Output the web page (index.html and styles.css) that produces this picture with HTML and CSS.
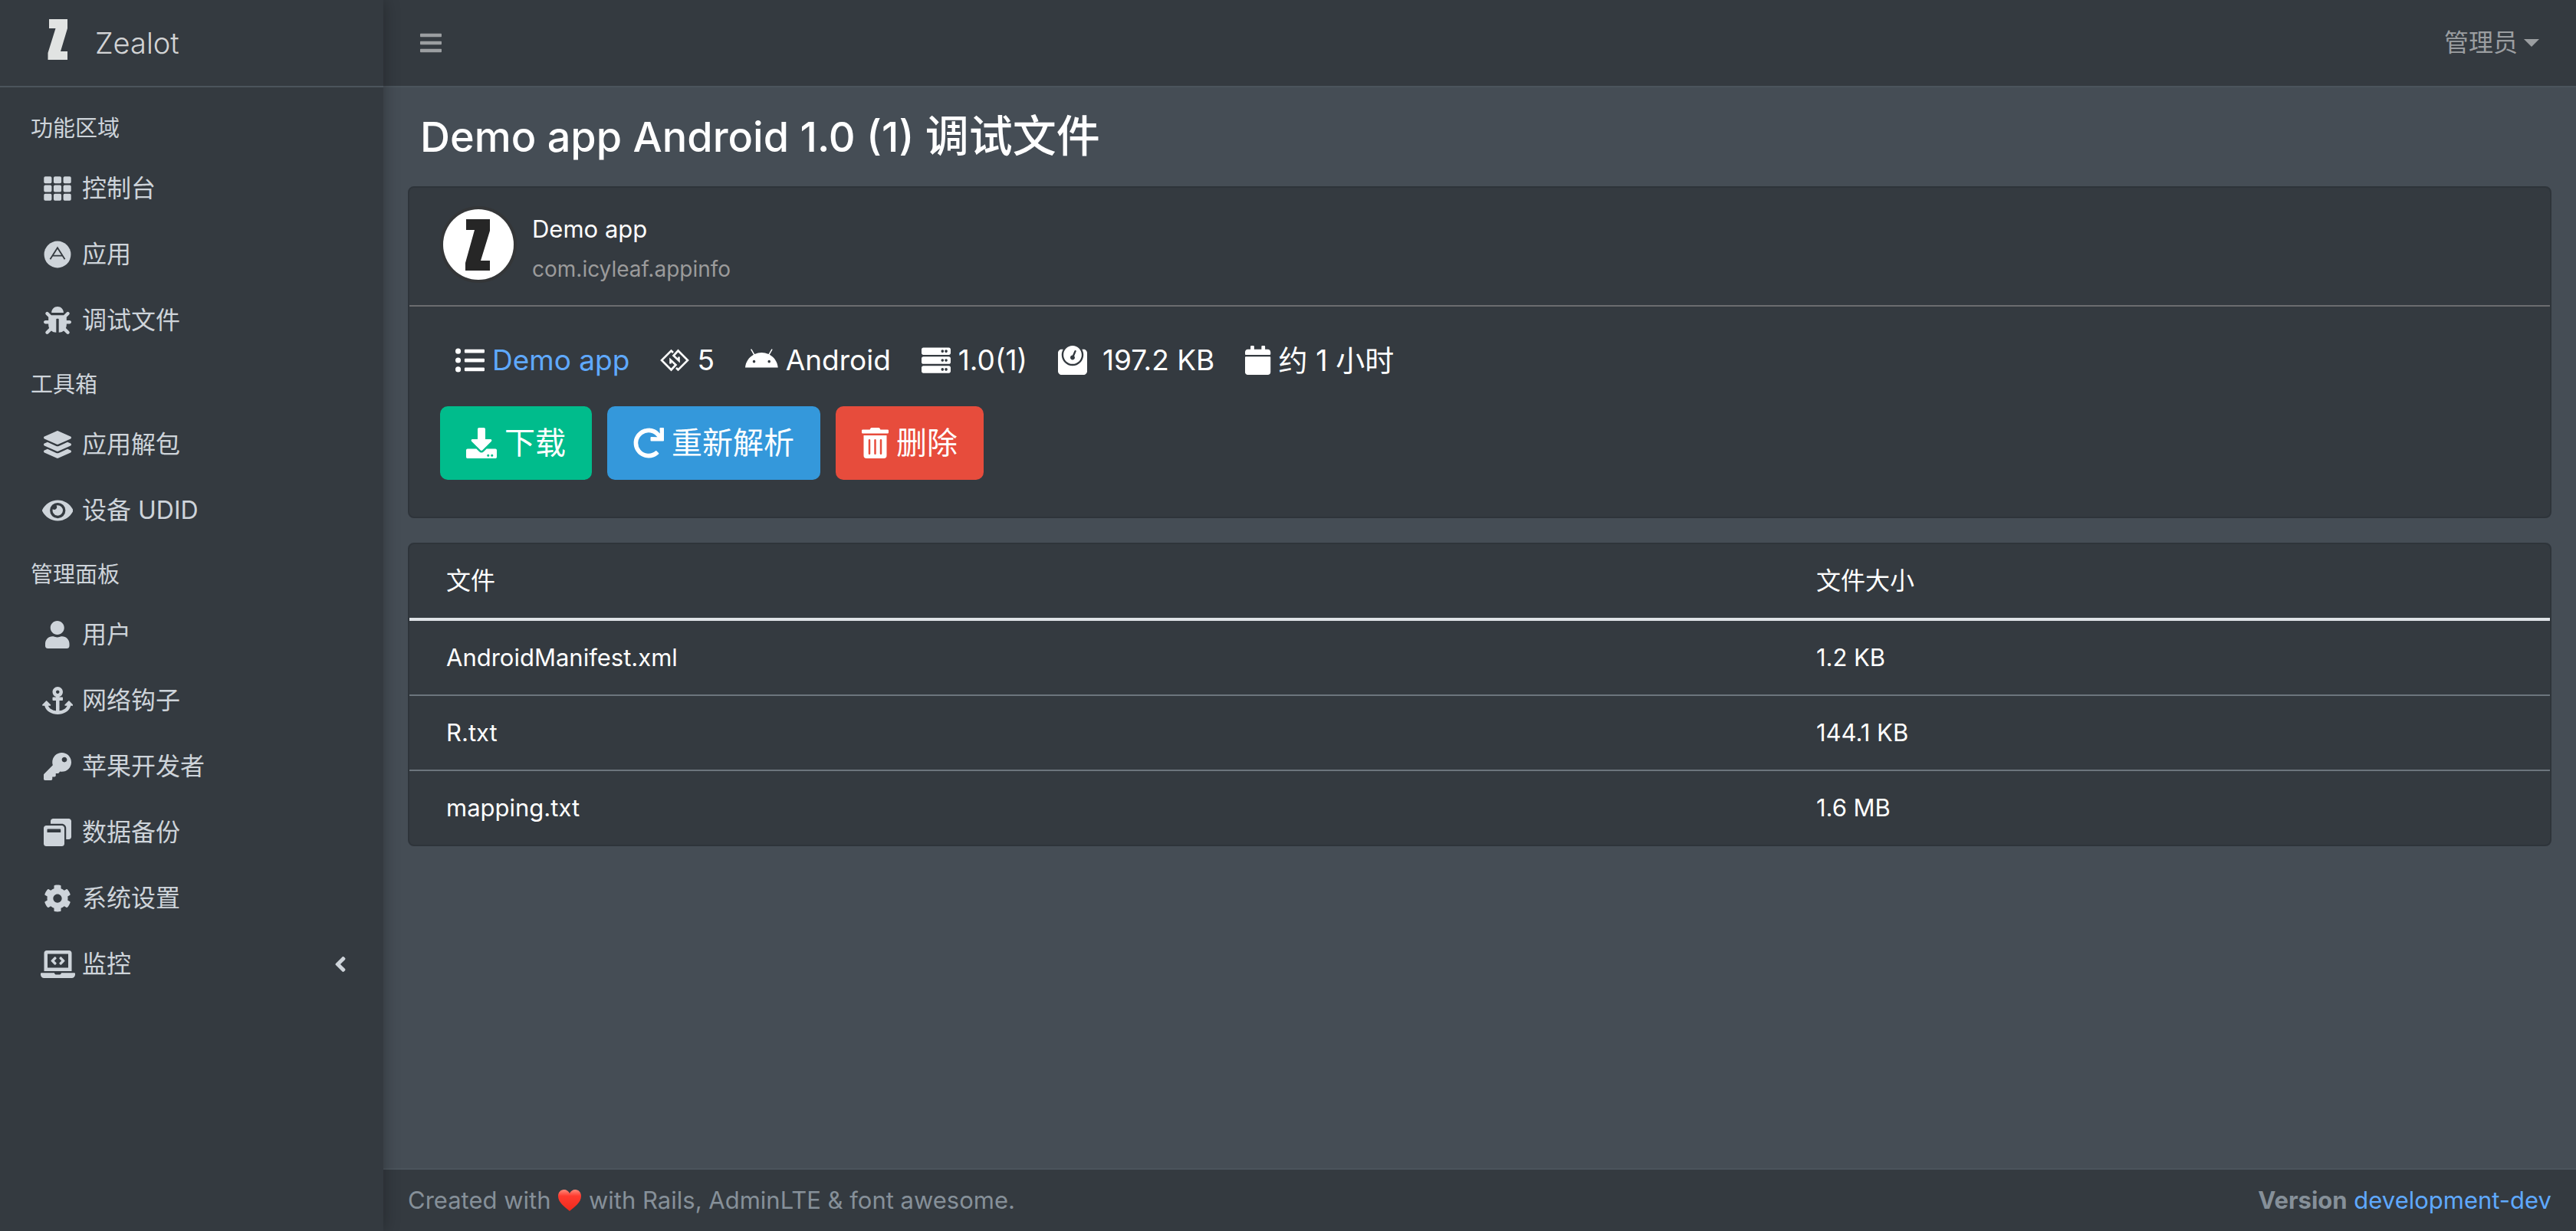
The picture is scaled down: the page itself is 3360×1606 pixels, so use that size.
FILE: index.html
```html
<!DOCTYPE html>
<html lang="zh-CN">
<head>
<meta charset="utf-8">
<meta name="viewport" content="width=device-width, initial-scale=1">
<title>Demo app Android 1.0 (1) 调试文件 | Zealot</title>
<link rel="stylesheet" href="styles.css">
</head>
<body>
<div class="wrapper">
  <aside class="sidebar">
    <a class="brand" href="#">
      <svg class="brand-logo" viewBox="0 0 32 64" aria-hidden="true"><path d="M4 5h24v12l-9 30h9v11H2.500V49l10-32H4z"/></svg>
      <span class="brand-text">Zealot</span>
    </a>
    <nav class="side-nav">
      <h2 class="nav-header">功能区域</h2>
      <a class="nav-link" href="#"><span class="nav-icon"><svg viewBox="0 0 512 512"><path d="M30 32h92a26 26 0 0 1 26 26v76a26 26 0 0 1-26 26H30a26 26 0 0 1-26-26V58a26 26 0 0 1 26-26zm180 0h92a26 26 0 0 1 26 26v76a26 26 0 0 1-26 26h-92a26 26 0 0 1-26-26V58a26 26 0 0 1 26-26zm180 0h92a26 26 0 0 1 26 26v76a26 26 0 0 1-26 26h-92a26 26 0 0 1-26-26V58a26 26 0 0 1 26-26zM30 192h92a26 26 0 0 1 26 26v76a26 26 0 0 1-26 26H30a26 26 0 0 1-26-26v-76a26 26 0 0 1 26-26zm180 0h92a26 26 0 0 1 26 26v76a26 26 0 0 1-26 26h-92a26 26 0 0 1-26-26v-76a26 26 0 0 1 26-26zm180 0h92a26 26 0 0 1 26 26v76a26 26 0 0 1-26 26h-92a26 26 0 0 1-26-26v-76a26 26 0 0 1 26-26zM30 352h92a26 26 0 0 1 26 26v76a26 26 0 0 1-26 26H30a26 26 0 0 1-26-26v-76a26 26 0 0 1 26-26zm180 0h92a26 26 0 0 1 26 26v76a26 26 0 0 1-26 26h-92a26 26 0 0 1-26-26v-76a26 26 0 0 1 26-26zm180 0h92a26 26 0 0 1 26 26v76a26 26 0 0 1-26 26h-92a26 26 0 0 1-26-26v-76a26 26 0 0 1 26-26z"/></svg></span>控制台</a>
      <a class="nav-link" href="#"><span class="nav-icon"><svg viewBox="0 0 512 512"><circle cx="256" cy="256" r="248"/><path class="icon-cut" d="M120 344 256 132l136 212M172 280h168"/></svg></span>应用</a>
      <a class="nav-link" href="#"><span class="nav-icon"><svg viewBox="0 0 512 512"><path d="M511.988 288.9c-.478 17.43-15.217 31.1-32.653 31.1H424v16c0 21.864-4.882 42.584-13.6 61.145l60.228 60.228c12.496 12.497 12.496 32.758 0 45.255-12.498 12.497-32.759 12.496-45.256 0l-54.736-54.736C345.886 467.965 314.351 480 280 480V236c0-6.627-5.373-12-12-12h-24c-6.627 0-12 5.373-12 12v244c-34.351 0-65.886-12.035-90.636-32.108l-54.736 54.736c-12.498 12.497-32.759 12.496-45.256 0-12.496-12.497-12.496-32.758 0-45.255l60.228-60.228C92.882 378.584 88 357.864 88 336v-16H32.666C15.23 320 .491 306.33.013 288.9-.484 270.816 14.028 256 32 256h56v-58.745l-46.628-46.628c-12.496-12.497-12.496-32.758 0-45.255 12.498-12.497 32.758-12.497 45.256 0L141.255 160h229.489l54.627-54.627c12.498-12.497 32.758-12.497 45.256 0 12.496 12.497 12.496 32.758 0 45.255L424 197.255V256h56c17.972 0 32.484 14.816 31.988 32.9zM257 0c-61.856 0-112 50.144-112 112h224C369 50.144 318.856 0 257 0z"/></svg></span>调试文件</a>
      <h2 class="nav-header">工具箱</h2>
      <a class="nav-link" href="#"><span class="nav-icon"><svg viewBox="0 0 512 512"><path d="M12.41 148.02l232.94 105.67c6.8 3.09 14.49 3.09 21.29 0l232.94-105.67c16.55-7.51 16.55-32.52 0-40.03L266.65 2.31a25.607 25.607 0 0 0-21.29 0L12.41 107.98c-16.55 7.51-16.55 32.53 0 40.04zm487.18 88.28l-58.09-26.33-161.64 73.27c-7.56 3.43-15.59 5.17-23.86 5.17s-16.29-1.74-23.86-5.17L70.51 209.97l-58.1 26.33c-16.55 7.5-16.55 32.5 0 40l232.94 105.59c6.8 3.08 14.49 3.08 21.29 0L499.59 276.3c16.55-7.5 16.55-32.5 0-40zm0 127.8l-57.87-26.23-161.86 73.37c-7.56 3.43-15.59 5.17-23.86 5.17s-16.29-1.74-23.86-5.17L70.29 337.87 12.41 364.1c-16.55 7.5-16.55 32.5 0 40l232.94 105.59c6.8 3.08 14.49 3.08 21.29 0L499.59 404.1c16.55-7.5 16.55-32.5 0-40z"/></svg></span>应用解包</a>
      <a class="nav-link" href="#"><span class="nav-icon"><svg viewBox="0 0 576 512"><path d="M572.52 241.4C518.29 135.59 410.93 64 288 64S57.68 135.64 3.48 241.41a32.35 32.35 0 0 0 0 29.19C57.71 376.41 165.07 448 288 448s230.32-71.64 284.52-177.41a32.35 32.35 0 0 0 0-29.19zM288 400a144 144 0 1 1 144-144 143.93 143.93 0 0 1-144 144zm0-240a95.31 95.31 0 0 0-25.31 3.79 47.85 47.85 0 0 1-66.9 66.9A95.78 95.78 0 1 0 288 160z"/></svg></span>设备 UDID</a>
      <h2 class="nav-header">管理面板</h2>
      <a class="nav-link" href="#"><span class="nav-icon"><svg viewBox="0 0 448 512"><path d="M224 256c70.7 0 128-57.3 128-128S294.7 0 224 0 96 57.3 96 128s57.3 128 128 128zm89.6 32h-16.7c-22.2 10.2-46.9 16-72.9 16s-50.6-5.8-72.9-16h-16.7C60.2 288 0 348.2 0 422.4V464c0 26.5 21.5 48 48 48h352c26.500 0 48-21.5 48-48v-41.6c0-74.2-60.2-134.4-134.4-134.4z"/></svg></span>用户</a>
      <a class="nav-link" href="#"><span class="nav-icon"><svg viewBox="0 0 576 512"><path d="M12.971 352h32.394C67.172 454.735 181.944 512 288 512c106.229 0 220.853-57.38 242.635-160h32.394c10.691 0 16.045-12.926 8.485-20.485l-67.029-67.029c-4.686-4.686-12.284-4.686-16.971 0l-67.029 67.029c-7.56 7.56-2.206 20.485 8.485 20.485h35.146c-20.29 54.317-84.963 86.588-144.117 94.015V256h52c6.627 0 12-5.373 12-12v-40c0-6.627-5.373-12-12-12h-52v-5.47c37.281-13.226 63.989-48.798 63.989-90.64C384.021 42.971 340.915-.114 287.88.001 235.042.115 192 43.002 192 95.852c0 41.915 26.761 77.562 64 90.678V192h-52c-6.627 0-12 5.373-12 12v40c0 6.627 5.373 12 12 12h52v190.015c-58.936-7.399-123.82-39.679-144.117-94.015h35.146c10.691 0 16.045-12.926 8.485-20.485l-67.029-67.029c-4.686-4.686-12.284-4.686-16.971 0L4.485 331.515C-3.074 339.074 2.28 352 12.971 352zM288 64c17.645 0 32 14.355 32 32s-14.355 32-32 32-32-14.355-32-32 14.355-32 32-32z"/></svg></span>网络钩子</a>
      <a class="nav-link" href="#"><span class="nav-icon"><svg viewBox="0 0 512 512"><path d="M512 176.001C512 273.203 433.202 352 336 352c-11.22 0-22.19-1.062-32.827-3.069l-24.012 27.014A23.999 23.999 0 0 1 261.223 384H224v40c0 13.255-10.745 24-24 24h-40v40c0 13.255-10.745 24-24 24H24c-13.255 0-24-10.745-24-24v-78.059c0-6.365 2.529-12.47 7.029-16.971l161.802-161.802C163.108 213.814 160 195.271 160 176 160 78.798 238.797.001 335.999 0 433.488-.001 512 78.511 512 176.001zM336 128c0 26.51 21.49 48 48 48s48-21.49 48-48-21.49-48-48-48-48 21.49-48 48z"/></svg></span>苹果开发者</a>
      <a class="nav-link" href="#"><span class="nav-icon"><svg viewBox="0 0 512 512"><path d="M512 48v288c0 26.500-21.500 48-48 48h-48V176c0-44.100-35.900-80-80-80H128V48c0-26.500 21.500-48 48-48h288c26.500 0 48 21.500 48 48zM384 176v288c0 26.500-21.500 48-48 48H48c-26.500 0-48-21.500-48-48V176c0-26.500 21.500-48 48-48h288c26.500 0 48 21.500 48 48zm-68 28c0-6.600-5.400-12-12-12H76c-6.600 0-12 5.400-12 12v52h252v-52z"/></svg></span>数据备份</a>
      <a class="nav-link" href="#"><span class="nav-icon"><svg viewBox="0 0 512 512"><path d="M487.4 315.7l-42.6-24.6c4.3-23.2 4.3-47 0-70.2l42.6-24.6c4.9-2.8 7.1-8.6 5.5-14-11.1-35.6-30-67.8-54.7-94.6-3.8-4.1-10-5.1-14.8-2.3L380.8 110c-17.9-15.4-38.5-27.3-60.8-35.1V25.8c0-5.6-3.9-10.5-9.4-11.7-36.7-8.2-74.3-7.8-109.2 0-5.5 1.2-9.4 6.1-9.4 11.7V75c-22.2 7.9-42.8 19.8-60.8 35.1L88.7 85.5c-4.9-2.8-11-1.9-14.8 2.3-24.7 26.7-43.6 58.9-54.7 94.6-1.7 5.4.6 11.2 5.5 14L67.3 221c-4.3 23.2-4.3 47 0 70.2l-42.6 24.6c-4.9 2.8-7.1 8.6-5.5 14 11.1 35.6 30 67.8 54.7 94.6 3.8 4.1 10 5.1 14.8 2.3l42.6-24.6c17.9 15.4 38.5 27.3 60.8 35.1v49.2c0 5.6 3.9 10.5 9.4 11.7 36.7 8.2 74.3 7.8 109.2 0 5.5-1.2 9.4-6.1 9.4-11.7v-49.2c22.2-7.9 42.8-19.8 60.8-35.1l42.6 24.6c4.9 2.8 11 1.9 14.8-2.3 24.7-26.7 43.6-58.9 54.7-94.6 1.5-5.5-.7-11.3-5.6-14.100zM256 336c-44.1 0-80-35.9-80-80s35.9-80 80-80 80 35.9 80 80-35.9 80-80 80z"/></svg></span>系统设置</a>
      <a class="nav-link" href="#"><span class="nav-icon"><svg viewBox="0 0 640 512"><path d="M255.03 261.65c6.25 6.25 16.38 6.25 22.63 0l11.31-11.31c6.25-6.25 6.25-16.38 0-22.63L253.25 192l35.71-35.72c6.25-6.25 6.25-16.38 0-22.63l-11.31-11.31c-6.25-6.25-16.38-6.25-22.63 0l-58.34 58.34c-6.25 6.25-6.25 16.38 0 22.63l58.35 58.34zm96.01-11.3l11.31 11.31c6.25 6.25 16.38 6.25 22.63 0l58.34-58.34c6.25-6.25 6.25-16.38 0-22.63l-58.34-58.34c-6.25-6.25-16.38-6.25-22.63 0l-11.31 11.31c-6.25 6.25-6.25 16.38 0 22.63L386.75 192l-35.71 35.72c-6.25 6.25-6.25 16.38 0 22.63zM624 416H381.54c-.74 19.81-14.71 32-32.74 32H288c-18.69 0-33.02-17.47-32.77-32H16c-8.8 0-16 7.2-16 16v16c0 35.2 28.8 64 64 64h512c35.2 0 64-28.8 64-64v-16c0-8.8-7.2-16-16-16zM576 48c0-26.4-21.6-48-48-48H112C85.6 0 64 21.6 64 48v336h512V48zm-64 272H128V64h384v256z"/></svg></span>监控<svg class="nav-arrow" viewBox="0 0 256 512"><path d="M31.7 239l136-136c9.400-9.400 24.600-9.400 33.900 0l22.600 22.600c9.400 9.400 9.400 24.600 0 33.900L127.900 256l96.400 96.400c9.400 9.400 9.400 24.600 0 33.900L201.700 409c-9.400 9.400-24.600 9.400-33.900 0l-136-136c-9.500-9.400-9.500-24.600-.1-34z"/></svg></a>
    </nav>
  </aside>

  <div class="page">
    <header class="navbar">
      <button class="navbar-toggle" type="button" aria-label="菜单"><svg viewBox="0 0 448 512"><path d="M16 132h416c8.837 0 16-7.163 16-16V76c0-8.837-7.163-16-16-16H16C7.163 60 0 67.163 0 76v40c0 8.837 7.163 16 16 16zm0 160h416c8.837 0 16-7.163 16-16v-40c0-8.837-7.163-16-16-16H16c-8.837 0-16 7.163-16 16v40c0 8.837 7.163 16 16 16zm0 160h416c8.837 0 16-7.163 16-16v-40c0-8.837-7.163-16-16-16H16c-8.837 0-16 7.163-16 16v40c0 8.837 7.163 16 16 16z"/></svg></button>
      <button class="navbar-user" type="button">管理员<span class="caret"></span></button>
    </header>

    <main class="content">
      <h1 class="page-title">Demo app Android 1.0 (1) <span class="page-title-zh">调试文件</span></h1>

      <section class="card">
        <div class="card-header">
          <svg class="app-icon" viewBox="0 0 100 100" aria-hidden="true"><circle cx="50" cy="50" r="50" fill="#343638"/><circle cx="50" cy="50" r="46" fill="#fff"/><path fill="#262626" d="M34 17h31v15L53 71h12v13H33V74l12-43H34z"/></svg>
          <div class="app-meta">
            <span class="app-name">Demo app</span>
            <span class="app-id">com.icyleaf.appinfo</span>
          </div>
        </div>
        <div class="card-body">
          <ul class="facts">
            <li><svg viewBox="0 0 512 512"><path d="M48 48a48 48 0 1 0 48 48 48 48 0 0 0-48-48zm0 160a48 48 0 1 0 48 48 48 48 0 0 0-48-48zm0 160a48 48 0 1 0 48 48 48 48 0 0 0-48-48zm448 16H176a16 16 0 0 0-16 16v32a16 16 0 0 0 16 16h320a16 16 0 0 0 16-16v-32a16 16 0 0 0-16-16zm0-320H176a16 16 0 0 0-16 16v32a16 16 0 0 0 16 16h320a16 16 0 0 0 16-16V80a16 16 0 0 0-16-16zm0 160H176a16 16 0 0 0-16 16v32a16 16 0 0 0 16 16h320a16 16 0 0 0 16-16v-32a16 16 0 0 0-16-16z"/></svg><a href="#">Demo app</a></li>
            <li><svg class="icon-line" viewBox="0 0 38 38"><path d="M17 9 14.500 6.500 2 19l12.500 12.500 6-6.500-7-6.500v5M21 29l2.500 2.500L36 19 23.500 6.500l-6 6.500 7 6.500v-5"/></svg>5</li>
            <li><svg viewBox="0 0 576 512"><path d="M420.55,301.93a24,24,0,1,1,24-24,24,24,0,0,1-24,24m-265.1,0a24,24,0,1,1,24-24,24,24,0,0,1-24,24m273.7-144.48,47.94-83a10,10,0,1,0-17.27-10h0l-48.54,84.07a301.25,301.25,0,0,0-246.56,0L116.18,64.45a10,10,0,1,0-17.27,10h0l47.94,83C64.53,202.22,8.24,285.55,0,384H576c-8.24-98.45-64.54-181.78-146.85-226.55"/></svg>Android</li>
            <li><svg viewBox="0 0 512 512"><path d="M480 160H32c-17.673 0-32-14.327-32-32V64c0-17.673 14.327-32 32-32h448c17.673 0 32 14.327 32 32v64c0 17.673-14.327 32-32 32zm-48-88c-13.255 0-24 10.745-24 24s10.745 24 24 24 24-10.745 24-24-10.745-24-24-24zm-64 0c-13.255 0-24 10.745-24 24s10.745 24 24 24 24-10.745 24-24-10.745-24-24-24zm112 248H32c-17.673 0-32-14.327-32-32v-64c0-17.673 14.327-32 32-32h448c17.673 0 32 14.327 32 32v64c0 17.673-14.327 32-32 32zm-48-88c-13.255 0-24 10.745-24 24s10.745 24 24 24 24-10.745 24-24-10.745-24-24-24zm-64 0c-13.255 0-24 10.745-24 24s10.745 24 24 24 24-10.745 24-24-10.745-24-24-24zm112 248H32c-17.673 0-32-14.327-32-32v-64c0-17.673 14.327-32 32-32h448c17.673 0 32 14.327 32 32v64c0 17.673-14.327 32-32 32zm-48-88c-13.255 0-24 10.745-24 24s10.745 24 24 24 24-10.745 24-24-10.745-24-24-24zm-64 0c-13.255 0-24 10.745-24 24s10.745 24 24 24 24-10.745 24-24-10.745-24-24-24z"/></svg>1.0(1)</li>
            <li class="fact-wide"><svg viewBox="0 0 512 512"><path d="M448 64h-25.980C438.440 92.280 448 125.010 448 160c0 105.870-86.130 192-192 192S64 265.870 64 160c0-34.990 9.560-67.720 25.980-96H64C28.710 64 0 92.710 0 128v320c0 35.290 28.710 64 64 64h384c35.290 0 64-28.710 64-64V128c0-35.290-28.710-64-64-64zM256 320c88.370 0 160-71.630 160-160S344.370 0 256 0 96 71.630 96 160s71.630 160 160 160zm-.3-151.940l33.580-78.360c3.500-8.170 12.940-11.920 21.030-8.410 8.120 3.480 11.880 12.890 8.410 21l-33.670 78.550C291.730 188 296 197.450 296 208c0 22.090-17.910 40-40 40s-40-17.910-40-40c0-21.980 17.760-39.770 39.700-39.940z"/></svg>197.2 KB</li>
            <li class="fact-zh"><svg viewBox="0 0 448 512"><path d="M12 192h424c6.6 0 12 5.4 12 12v260c0 26.5-21.5 48-48 48H48c-26.5 0-48-21.5-48-48V204c0-6.6 5.4-12 12-12zm436-44v-36c0-26.500-21.500-48-48-48h-48V12c0-6.600-5.400-12-12-12h-40c-6.600 0-12 5.400-12 12v52H160V12c0-6.600-5.400-12-12-12h-40c-6.600 0-12 5.400-12 12v52H48C21.500 64 0 85.500 0 112v36c0 6.600 5.400 12 12 12h424c6.600 0 12-5.400 12-12z"/></svg>约 1 小时</li>
          </ul>
          <div class="actions">
            <button class="btn btn-success" type="button"><svg viewBox="0 0 512 512"><path d="M216 0h80c13.3 0 24 10.7 24 24v168h87.7c17.8 0 26.7 21.5 14.1 34.1L269.7 378.3c-7.5 7.5-19.8 7.5-27.3 0L90.1 226.1c-12.6-12.6-3.7-34.1 14.1-34.1H192V24c0-13.3 10.7-24 24-24zm296 376v112c0 13.3-10.7 24-24 24H24c-13.3 0-24-10.7-24-24V376c0-13.3 10.7-24 24-24h146.7l49 49c20.1 20.1 52.5 20.1 72.6 0l49-49H488c13.3 0 24 10.7 24 24zm-124 88c0-11-9-20-20-20s-20 9-20 20 9 20 20 20 20-9 20-20zm64 0c0-11-9-20-20-20s-20 9-20 20 9 20 20 20 20-9 20-20z"/></svg>下载</button>
            <button class="btn btn-info" type="button"><svg viewBox="0 0 512 512"><path d="M500.33 0h-47.41a12 12 0 0 0-12 12.57l4 82.76A247.42 247.42 0 0 0 256 8C119.34 8 7.9 119.53 8 256.19 8.1 393.07 119.1 504 256 504a247.1 247.1 0 0 0 166.18-63.91 12 12 0 0 0 .48-17.43l-34-34a12 12 0 0 0-16.38-.55A176 176 0 1 1 402.1 157.8l-101.53-4.87a12 12 0 0 0-12.57 12v47.41a12 12 0 0 0 12 12h200.33a12 12 0 0 0 12-12V12a12 12 0 0 0-12-12z"/></svg>重新解析</button>
            <button class="btn btn-danger" type="button"><svg viewBox="0 0 448 512"><path d="M32 464a48 48 0 0 0 48 48h288a48 48 0 0 0 48-48V128H32zm272-256a16 16 0 0 1 32 0v224a16 16 0 0 1-32 0zm-96 0a16 16 0 0 1 32 0v224a16 16 0 0 1-32 0zm-96 0a16 16 0 0 1 32 0v224a16 16 0 0 1-32 0zM432 32H312l-9.4-18.7A24 24 0 0 0 281.1 0H166.8a23.72 23.72 0 0 0-21.4 13.3L136 32H16A16 16 0 0 0 0 48v32a16 16 0 0 0 16 16h416a16 16 0 0 0 16-16V48a16 16 0 0 0-16-16z"/></svg>删除</button>
          </div>
        </div>
      </section>

      <section class="card">
        <table class="files">
          <thead><tr><th class="col-name" scope="col">文件</th><th scope="col">文件大小</th></tr></thead>
          <tbody>
            <tr><td>AndroidManifest.xml</td><td>1.2 KB</td></tr>
            <tr><td>R.txt</td><td>144.1 KB</td></tr>
            <tr><td>mapping.txt</td><td>1.6 MB</td></tr>
          </tbody>
        </table>
      </section>
    </main>

    <footer class="footer">
      <p>Created with <svg class="heart" viewBox="0 0 32 30" role="img" aria-label="love"><defs><linearGradient id="heart-fill" x1="0" y1="0" x2="0" y2="1"><stop offset="0" stop-color="#ff8a7a"/><stop offset=".3" stop-color="#ff3b2f"/><stop offset="1" stop-color="#f02a1c"/></linearGradient></defs><path fill="url(#heart-fill)" d="M16 29C10 24 1 18 1 9.500 1 4.500 4.500 1 8.500 1 12 1 14.800 3 16 6c1.200-3 4-5 7.500-5C27.500 1 31 4.500 31 9.500 31 18 22 24 16 29z"/></svg> with Rails, AdminLTE &amp; font awesome.</p>
      <p><strong>Version</strong> <a href="#">development-dev</a></p>
    </footer>
  </div>
</div>
</body>
</html>
```

FILE: styles.css
```css
* {
  box-sizing: border-box;
}

body {
  margin: 0;
  background: #454d55;
  color: #fff;
  font-family: Inter, "Noto Sans CJK SC", sans-serif;
  font-size: 31px;
  line-height: 48px;
}

a {
  color: #5fa9ff;
  text-decoration: none;
}

p,
h1,
h2,
ul {
  margin: 0;
  padding: 0;
}

svg {
  fill: currentColor;
}

button {
  border: 0;
  background: none;
  color: inherit;
  font: inherit;
  cursor: pointer;
}

.wrapper {
  display: flex;
  min-height: 100vh;
}

/* Sidebar */

.sidebar {
  position: relative;
  z-index: 1;
  flex: 0 0 500px;
  background: #343a40;
  box-shadow: 0 0 20px rgba(0, 0, 0, 0.3);
}

.brand {
  display: flex;
  align-items: center;
  gap: 32px;
  height: 114px;
  padding: 0 60px;
  border-bottom: 2px solid #4b545c;
  color: rgba(255, 255, 255, 0.8);
}

.brand-logo {
  width: 32px;
  height: 64px;
  margin-bottom: 8px;
  fill: #e1e3e2;
}

.brand-text {
  font-size: 38px;
  font-weight: 300;
}

.side-nav {
  padding: 16px;
}

.nav-header {
  padding: 16px 24px;
  color: #ced4da;
  font-size: 29px;
  font-weight: 400;
  line-height: 44px;
}

.nav-link {
  display: flex;
  align-items: center;
  margin-bottom: 6px;
  padding: 16px 32px;
  color: #ced4da;
  font-size: 32px;
}

.nav-icon {
  display: flex;
  justify-content: center;
  width: 52px;
  margin: 0 6px 0 1px;
}

.nav-icon svg {
  height: 36px;
}

.icon-cut {
  fill: none;
  stroke: #343a40;
  stroke-width: 26;
}

.nav-arrow {
  height: 32px;
  margin: 0 0 0 auto;
}

/* Top bar */

.page {
  display: flex;
  flex: 1;
  flex-direction: column;
  min-width: 0;
}

.navbar {
  display: flex;
  align-items: center;
  justify-content: space-between;
  height: 114px;
  padding: 0 16px;
  border-bottom: 2px solid #4b545c;
  background: #343a40;
  color: #9b9ea1;
}

.navbar-toggle,
.navbar-user {
  display: flex;
  align-items: center;
  padding: 16px 32px;
}

.navbar-toggle svg {
  height: 32px;
}

.navbar-user {
  gap: 8px;
  font-size: 32px;
}

.caret {
  border: 10px solid transparent;
  border-top-color: currentColor;
  border-bottom: 0;
}

/* Content */

.content {
  flex: 1;
  padding: 30px 32px;
}

.page-title {
  padding: 0 16px;
  font-size: 54px;
  font-weight: 500;
  line-height: 70px;
}

.page-title-zh {
  font-size: 57px;
  line-height: 1;
}

.card {
  margin-top: 29px;
  border: 2px solid #2e343a;
  border-radius: 8px;
  background: #343a40;
}

.card + .card {
  margin-top: 32px;
}

.card-header {
  display: flex;
  gap: 20px;
  padding: 24px 40px 27px;
  border-bottom: 2px solid #6b6c6f;
}

.app-icon {
  width: 100px;
  height: 100px;
}

.app-meta {
  display: flex;
  flex-direction: column;
  gap: 12px;
  padding-top: 10px;
  line-height: 40px;
}

.app-name {
  font-size: 31px;
}

.app-id {
  color: #9b9b9b;
  font-size: 28px;
}

.card-body {
  padding: 40px 40px 48px;
}

.facts {
  display: flex;
  gap: 40px;
  padding: 0 20px;
  list-style: none;
  font-size: 37px;
  line-height: 60px;
}

.facts li {
  display: flex;
  align-items: center;
  gap: 10px;
}

.facts .fact-wide {
  gap: 20px;
}

.facts .fact-zh {
  font-size: 38px;
}

.facts svg {
  height: 38px;
}

.facts .icon-line {
  fill: none;
  stroke: currentColor;
  stroke-width: 2.6;
}

.actions {
  display: flex;
  gap: 20px;
  padding-top: 30px;
}

.btn {
  display: flex;
  align-items: center;
  gap: 10px;
  padding: 18px 34px;
  border-radius: 10px;
  font-size: 40px;
  line-height: 60px;
}

.btn svg {
  height: 40px;
}

.btn-success {
  background: #00bc8c;
}

.btn-info {
  background: #3498db;
}

.btn-danger {
  background: #e74c3c;
}

.files {
  width: 100%;
  border-collapse: separate;
  border-spacing: 0;
  table-layout: fixed;
}

.files th,
.files td {
  padding: 24px 48px;
  text-align: left;
}

.files th {
  border-bottom: 4px solid #dee2e6;
  font-size: 32px;
  font-weight: 400;
}

.files tr + tr td {
  border-top: 2px solid #6c757d;
}

.col-name {
  width: 64%;
}

/* Footer */

.footer {
  display: flex;
  justify-content: space-between;
  padding: 16px 32px;
  border-top: 2px solid #4b545c;
  background: #343a40;
  color: #869099;
}

.heart {
  width: 32px;
  height: 30px;
  vertical-align: -4px;
}
```
